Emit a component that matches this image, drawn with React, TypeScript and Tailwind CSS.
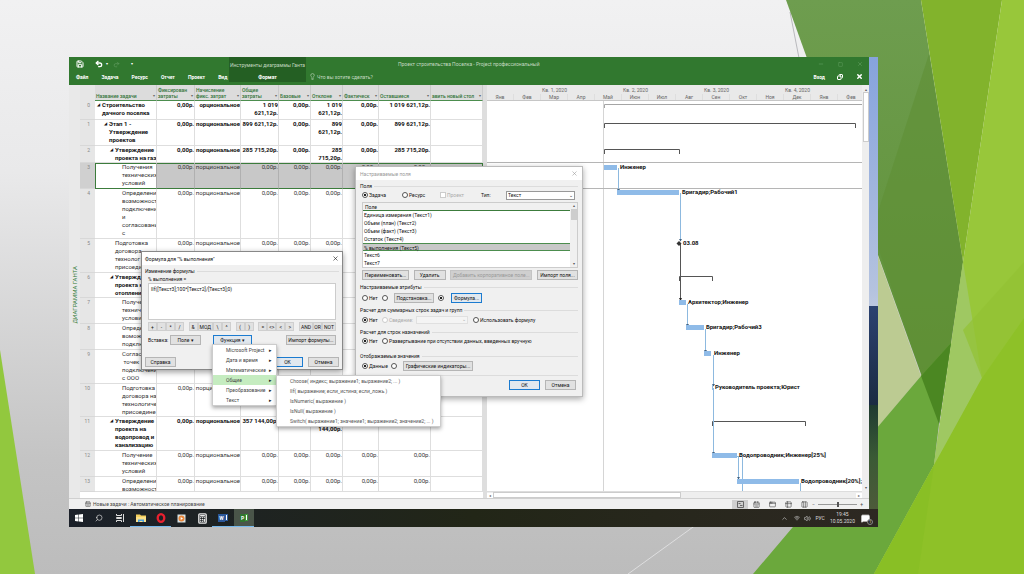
import React, { useState } from 'react';
import { clsx } from 'clsx';
import {
  AppWindow, Calculator, CalendarDays, ChevronUp, Columns3, Copy, Lightbulb, MessageSquare,
  Minus, Redo2, Save, Search, Square, Table2, Undo2, Volume2, Wifi, X,
} from 'lucide-react';

interface TaskRow {
  id: number;
  height: string;
  indent: string;
  name: string;
  values: string[];
  summary?: boolean;
  selected?: boolean;
}

const ZERO = '0,00р.';
const SHARE = 'порциональное';

const rows: TaskRow[] = [
  { id: 0, height: 'h-[19px]', indent: 'pl-[7px]', summary: true, name: 'Строительство\nдачного поселка', values: [ZERO, 'орциональное', '1 019\n621,12р.', ZERO, '1 019\n621,12р.', ZERO, '1 019 621,12р.'] },
  { id: 1, height: 'h-[26px]', indent: 'pl-[14px]', summary: true, name: 'Этап 1 -\nУтверждение\nпроектов', values: [ZERO, SHARE, '899 621,12р.', ZERO, '899\n621,12р.', ZERO, '899 621,12р.'] },
  { id: 2, height: 'h-[17px]', indent: 'pl-[20px]', summary: true, name: 'Утверждение\nпроекта на газ', values: [ZERO, SHARE, '285 715,20р.', ZERO, '285\n715,20р.', ZERO, '285 715,20р.'] },
  { id: 3, height: 'h-[26px]', indent: 'pl-[27px]', selected: true, name: 'Получения\nтехнических\nусловий', values: [ZERO, SHARE, ZERO, ZERO, ZERO, ZERO, ZERO] },
  { id: 4, height: 'h-[50px]', indent: 'pl-[27px]', name: 'Определени\nвозможност\nподключени\nи\nсогласовани\nс', values: [ZERO, SHARE, ZERO, ZERO, ZERO, '', ''] },
  { id: 5, height: 'h-[34px]', indent: 'pl-[20px]', name: 'Подготовка\nдоговора\nтехнолог\nприсоеди', values: [ZERO, SHARE, ZERO, ZERO, ZERO, '', ''] },
  { id: 6, height: 'h-[25px]', indent: 'pl-[20px]', summary: true, name: 'Утвержд\nпроекта н\nотоплени', values: ['', '', '', '', '', '', ''] },
  { id: 7, height: 'h-[26px]', indent: 'pl-[27px]', name: 'Получе\nтехнич\nуслови', values: ['', '', '', '', '', '', ''] },
  { id: 8, height: 'h-[26px]', indent: 'pl-[27px]', name: 'Опреде\nвомож\nподклю', values: ['', '', '', '', '', '', ''] },
  { id: 9, height: 'h-[34px]', indent: 'pl-[27px]', name: 'Соглас\n точек\nподключени\nс ООО', values: ['', '', '', '', '', '', ''] },
  { id: 10, height: 'h-[33px]', indent: 'pl-[27px]', name: 'Подготовка\nдоговора на\nтехнологиче\nприсоедине', values: [ZERO, SHARE, '', '', '', '', ''] },
  { id: 11, height: 'h-[34px]', indent: 'pl-[20px]', summary: true, name: 'Утверждение\nпроекта на\nводопровод и\nканализацию', values: [ZERO, SHARE, '357 144,00р.', '', '\n144,00р.', '', ''] },
  { id: 12, height: 'h-[26px]', indent: 'pl-[27px]', name: 'Получение\nтехнических\nусловий', values: [ZERO, SHARE, ZERO, ZERO, ZERO, ZERO, ZERO] },
  { id: 13, height: 'h-[15px]', indent: 'pl-[27px]', name: 'Определени\nвозможност', values: [ZERO, SHARE, ZERO, ZERO, ZERO, ZERO, ZERO] },
];

const columns = [
  { title: 'Название задачи', width: 'w-[62px]' },
  { title: 'Фиксирован\nзатраты', width: 'w-[38px]' },
  { title: 'Начисление\nфикс. затрат', width: 'w-[46px]' },
  { title: 'Общие\nзатраты', width: 'w-[38px]' },
  { title: 'Базовые', width: 'w-[32px]' },
  { title: 'Отклоне', width: 'w-[32px]' },
  { title: 'Фактическ', width: 'w-[36px]' },
  { title: 'Оставшиеся', width: 'w-[52px]' },
  { title: 'авить новый стол', width: 'w-[52px]' },
];

const quarters = ['Кв. 1, 2020', 'Кв. 2, 2020', 'Кв. 3, 2020', 'Кв. 4, 2020'];
const months = ['Янв', 'Фев', 'Мар', 'Апр', 'Май', 'Июн', 'Июл', 'Авг', 'Сен', 'Окт', 'Ноя', 'Дек', 'Янв', 'Фев'];

// Gantt geometry, measured from the top left corner of the chart
const bars = [
  { x: 117, y: 65, w: 13, label: 'Инженер', lx: 133 },
  { x: 130, y: 90, w: 62, label: 'Бригадир;Рабочий1', lx: 195 },
  { x: 192, y: 200, w: 7, label: 'Архитектор;Инженер', lx: 201 },
  { x: 199, y: 225, w: 18, label: 'Бригадир;Рабочий3', lx: 219 },
  { x: 217, y: 251, w: 7, label: 'Инженер', lx: 227 },
  { x: 225, y: 285, w: 1, label: 'Руководитель проекта;Юрист', lx: 228 },
  { x: 225, y: 353, w: 25, label: 'Водопроводник;Инженер[25%]', lx: 252 },
  { x: 250, y: 379, w: 62, label: 'Водопроводник[20%];', lx: 314 },
];

const brackets = [
  { x: 117, y: 22, w: 251 },
  { x: 117, y: 48, w: 75 },
  { x: 192, y: 175, w: 33 },
  { x: 225, y: 320, w: 93 },
];

const links = [
  { x: 131, y: 67, to: 90 },
  { x: 193, y: 92, to: 140 },
  { x: 200, y: 203, to: 225 },
  { x: 218, y: 228, to: 251 },
  { x: 226, y: 254, to: 285 },
  { x: 226, y: 287, to: 353 },
  { x: 251, y: 356, to: 378 },
];

const fields = ['Единица измерения (Текст1)', 'Объем (план) (Текст2)', 'Объем (факт) (Текст3)', 'Остаток (Текст4)', '% выполнения (Текст5)', 'Текст6', 'Текст7'];
const functionGroups = ['Microsoft Project', 'Дата и время', 'Математические', 'Общие', 'Преобразование', 'Текст'];
const functionNames = [
  'Choose( индекс; выражение1; выражение2; ... )',
  'IIf( выражение; если_истина; если_ложь )',
  'IsNumeric( выражение )',
  'IsNull( выражение )',
  'Switch( выражение1; значение1; выражение2; значение2; ... )',
];
const operators = [['+', '-', '*', '/'], ['&', 'МОД', '\\', '^'], ['(', ')'], ['=', '<>', '<', '>'], ['AND', 'OR', 'NOT']];

const Backdrop = () => (
  <svg className="absolute inset-0 h-full w-full" viewBox="0 0 1024 574" preserveAspectRatio="none" aria-hidden="true">
    <defs>
      <linearGradient id="paper" x1="0" y1="0" x2="0" y2="1">
        <stop offset="0" stopColor="#f1f1f2" />
        <stop offset="0.3" stopColor="#e9e9ea" />
        <stop offset="0.8" stopColor="#c4c4c4" />
        <stop offset="1" stopColor="#bcbcbc" />
      </linearGradient>
      <linearGradient id="forest" x1="0" y1="0" x2="0" y2="1">
        <stop offset="0" stopColor="#6e9d4f" />
        <stop offset="1" stopColor="#5d8f33" />
      </linearGradient>
    </defs>
    <rect width="1024" height="574" fill="url(#paper)" />
    <path d="M790 12 799 58" stroke="#b9b9bd" fill="none" />
    <path d="M628 574 700 522" stroke="#dededf" fill="none" />
    <path d="M0 350 35 574H0Z" fill="#92c83e" />
    <path d="M878 256 921 376 878 427Z" fill="#bccb92" />
    <path d="M786 0H921L963 262 939 424Z" fill="url(#forest)" />
    <path d="M929 54 963 262 939 424 872 230Z" fill="#5f9035" opacity="0.6" />
    <path d="M951 343 921 376 753 574H874L934 465 939 424Z" fill="#6ba83c" />
    <path d="M951 343 921 376 939 424Z" fill="#4b8722" />
    <path d="M921 0H1002L963 262Z" fill="#82b32c" />
    <path d="M1002 0H1024V574H874L934 465 963 262Z" fill="#98c73a" />
    <path d="M963 262 982 378 946 445 934 465Z" fill="#9fc862" />
    <path d="M1024 262 963 330 982 378 1024 318Z" fill="#93c233" opacity="0.7" />
    <path d="M1024 318 982 378 874 574H1024Z" fill="#8ec128" />
    <path d="M934 465 918 574H874Z" fill="#89bf25" />
  </svg>
);

const Ribbon = () => (
  <header className="flex h-[28px] bg-[#31782f] text-[5px] leading-[6px] text-white">
    <div className="flex w-[160px] shrink-0 flex-col justify-between pt-[3px] pb-[5px] pl-[7px]">
      <div className="flex h-[8px] items-center gap-[3px]">
        <button aria-label="Сохранить" className="mr-[8px]"><Save size={8} strokeWidth={3} /></button>
        <button aria-label="Отменить"><Undo2 size={8} strokeWidth={4} /></button>
        <span className="text-[4px]">▾</span>
        <button aria-label="Вернуть" className="ml-[2px] text-[#67a065]"><Redo2 size={7} /></button>
        <span className="ml-[8px] text-[4px]">▾</span>
      </div>
      <nav className="flex gap-[13px] font-bold">
        <button>Файл</button>
        <button>Задача</button>
        <button>Ресурс</button>
        <button>Отчет</button>
        <button>Проект</button>
        <button>Вид</button>
      </nav>
    </div>
    <div className="flex h-[25px] w-[77px] shrink-0 flex-col items-center justify-between bg-[#245f23] pt-[5px] pb-[2px]">
      <span className="whitespace-nowrap text-[#c4dac2]">Инструменты диаграммы Ганта</span>
      <button className="font-bold">Формат</button>
    </div>
    <div className="flex min-w-0 flex-1 flex-col justify-between pt-[4px] pr-[6px] pb-[5px] pl-[3px]">
      <div className="flex items-center text-[#c4dac2]">
        <span className="flex-1 pl-[89px]">Проект строительства Поселка - Project профессиональный</span>
        <div className="flex w-[45px] justify-between text-[#6ba569]">
          <button aria-label="Свернуть"><Minus size={6} /></button>
          <button aria-label="Развернуть"><Square size={5} /></button>
          <button aria-label="Закрыть"><X size={6} /></button>
        </div>
      </div>
      <div className="flex items-center">
        <Lightbulb size={7} className="mr-px text-[#c4dac2]" />
        <button className="text-[#c4dac2]">Что вы хотите сделать?</button>
        <button className="mr-[12px] ml-auto font-bold">Вход</button>
        <button aria-label="Восстановить окно" className="mr-[13px]"><Copy size={6} strokeWidth={4} className="-scale-x-100" /></button>
        <button aria-label="Закрыть проект"><X size={7} strokeWidth={5} /></button>
      </div>
    </div>
  </header>
);

const TaskTable = () => (
  <table className="w-[403px] table-fixed border-separate border-spacing-0 text-[6px] leading-[8px] text-[#333]">
    <thead>
      <tr className="h-[16px] text-[5px] leading-[6px] text-[#33743a]">
        <th className="w-[15px] bg-[#e6e6e6]" aria-label="Номер" />
        {columns.map((col) => (
          <th key={col.title} className={clsx('overflow-hidden border-r border-b border-r-[#cacaca] border-b-[#4c8d4e] bg-[#dcdcdc] px-px pb-px align-bottom font-medium', col.width)}>
            <div className="flex items-end justify-between">
              <span className="whitespace-pre text-left">{col.title}</span>
              <span className="text-[4px] text-[#666]">▾</span>
            </div>
          </th>
        ))}
      </tr>
    </thead>
    <tbody>
      {rows.map((row) => (
        <tr key={row.id} className={clsx(row.height, row.summary && 'font-bold text-[#111]')}>
          <td className={clsx('border-b border-b-[#d8d8d8] p-0 pr-[5px] text-right align-top text-[5px] font-normal text-[#888]', row.selected ? 'bg-[#d0d0d0]' : 'bg-[#e6e6e6]')}>
            {row.id}
          </td>
          <td className={clsx('relative overflow-hidden border-r border-b p-0 align-top whitespace-pre', row.indent, row.selected ? 'border-b-[#3c7c3c] border-r-[#aaa] shadow-[inset_1px_1px_#3c7c3c]' : 'border-[#dedede]')}>
            {row.summary && <span className="absolute -ml-[5px] text-[4px] leading-[8px]">◢</span>}
            <div className={row.id === 13 ? 'h-[14px] overflow-hidden' : ''}>{row.name}</div>
          </td>
          {row.values.map((value, i) => (
            <td key={i} className={clsx('overflow-hidden border-r border-b p-0 align-top', row.selected ? 'border-b-[#3c7c3c] border-r-[#b0b0b0] bg-[#c8c8c8] shadow-[inset_0_1px_#3c7c3c]' : 'border-[#dedede]')}>
              <div className="flex justify-end text-right whitespace-pre">{value}</div>
            </td>
          ))}
          <td className={clsx('border-r border-b', row.selected ? 'border-b-[#3c7c3c] border-r-[#3c7c3c] bg-[#c8c8c8] shadow-[inset_0_1px_#3c7c3c]' : 'border-[#dedede]')} />
        </tr>
      ))}
    </tbody>
  </table>
);

const GanttChart = () => (
  <div className="flex min-w-0 flex-1 flex-col">
    <div className="overflow-hidden border-b border-[#c6c6c6] bg-[#e9e9e9] text-[5px] leading-[6px] text-[#666]">
      <div className="flex h-[8px] items-center pl-[27px] pt-px">
        {quarters.map((q) => <span key={q} className="w-[81px] shrink-0 text-center">{q}</span>)}
      </div>
      <div className="flex h-[7px] items-center">
        {months.map((m, i) => <span key={i} className="w-[27px] shrink-0 border-r border-[#dedede] text-center">{m}</span>)}
      </div>
    </div>
    <svg className="block h-[390px] w-full bg-white" fontSize="6" fontWeight="bold" fill="#111">
      <path d="M116.500 0V390" stroke="#d5d5d5" />
      <path d="M117.500 7V3.500H375" stroke="#a5a5a5" fill="none" />
      <path d="M0 61.500H375M0 87.500H375" stroke="#b5b5b5" />
      {brackets.map((b) => (
        <path key={`${b.x}-${b.y}`} d={`M${b.x + 0.5} ${b.y + 5}V${b.y + 0.5}H${b.x + b.w + 0.5}V${b.y + 5}`} stroke="#555" fill="none" />
      ))}
      {links.map((l) => (
        <g key={l.y}>
          <path d={`M${l.x + 0.5} ${l.y}V${l.to}`} stroke="#8db9df" />
          <path d={`M${l.x - 1} ${l.to - 2}h3l-1.500 2.500z`} fill="#41607e" />
        </g>
      ))}
      <path d="M193.500 143V199" stroke="#555" />
      <path d="M192 197h3l-1.500 3z" fill="#222" />
      <path d="M192 140l2.500 2.500-2.500 2.500-2.500-2.500z" fill="#333" />
      <text x="196" y="144">03.08</text>
      <path d="M250 355.500H255.500V390M313.500 382V390" stroke="#8db9df" fill="none" />
      {bars.map((b) => (
        <g key={b.y}>
          <rect x={b.x} y={b.y - 1} width={b.w} height="5" fill="#8fbbe8" />
          <text x={b.lx} y={b.y + 3}>{b.label}</text>
        </g>
      ))}
    </svg>
    <div className="flex h-[7px] items-center justify-between border-t border-[#ddd] bg-[#eee] text-[4px] leading-[5px] text-[#666]">
      <button aria-label="Прокрутить влево" className="w-[6px] bg-white">◂</button>
      <div className="mr-auto h-[6px] w-1/2 border border-[#ccc] bg-white" />
      <button aria-label="Прокрутить вправо" className="w-[6px] bg-white">▸</button>
    </div>
  </div>
);

const StatusBar = () => (
  <footer className="flex h-[11px] items-center border-t border-[#d0d0d0] bg-[#f0f0f0] pr-[6px] pl-[16px] text-[5px] leading-[6px] text-[#444]">
    <CalendarDays size={6} className="mr-[2px]" />
    <span>Новые задачи : Автоматическое планирование</span>
    <div className="ml-auto flex items-center">
      <button aria-label="Диаграмма Ганта" className="flex h-[9px] w-[16px] items-center justify-center bg-[#cfcfcf]">
        <svg width="7" height="7" viewBox="0 0 7 7" fill="none" stroke="#666"><path d="M.5.5h6v6h-6zM1.500 2.500h2M3 4.500h2.500" /></svg>
      </button>
      <button aria-label="Использование задач" className="flex w-[16px] justify-center"><CalendarDays size={7} /></button>
      <button aria-label="Визуальный оптимизатор" className="flex w-[16px] justify-center"><AppWindow size={7} /></button>
      <button aria-label="Лист ресурсов" className="flex w-[16px] justify-center"><Table2 size={7} /></button>
      <button aria-label="Отчет" className="flex w-[16px] justify-center"><Columns3 size={7} /></button>
      <button aria-label="Уменьшить">−</button>
      <div className="mx-[3px] flex h-[5px] w-[39px] items-center justify-center bg-[linear-gradient(#999,#999)] bg-[length:100%_1px] bg-center bg-no-repeat">
        <span className="h-[5px] w-[2px] bg-[#555]" />
      </div>
      <button aria-label="Увеличить">+</button>
    </div>
  </footer>
);

const Taskbar = () => (
  <div className="flex h-[18px] items-stretch bg-linear-to-r from-[#1b2029] via-[#222617] to-[#2d2822] text-[5px] leading-[8px] text-[#ddd]">
    <button aria-label="Пуск" className="flex w-[20px] items-center justify-center">
      <svg width="8" height="8" viewBox="0 0 8 8" fill="#fff"><path d="M0 1l3.500-.5v3.300H0zM4 .5L8 0v3.800H4zM0 4.300h3.500v3.300L0 7zM4 4.300h4V8l-4-.5z" /></svg>
    </button>
    <button aria-label="Поиск" className="flex w-[20px] items-center justify-center"><Search size={8} className="-scale-x-100" /></button>
    <button aria-label="Представление задач" className="flex w-[21px] items-center justify-center">
      <svg width="8" height="8" viewBox="0 0 8 8" fill="none" stroke="#ddd"><path d="M.5 0v1.500h5V0M.5 8V6.500h5V8M.5 3.500h5v1h-5zM7.500 0v8" /></svg>
    </button>
    <button aria-label="Проводник" className="flex w-[21px] items-center justify-center border-b border-[#76b9ed]">
      <svg width="10" height="8" viewBox="0 0 10 8"><path d="M0 .5h4l1 1h5V8H0z" fill="#f4cf5e" /><path d="M0 3h10v5H0z" fill="#fbe08a" /><path d="M2 8V5.500h6V8H6.500V7h-3v1z" fill="#4aa0dc" /></svg>
    </button>
    <button aria-label="Opera" className="flex w-[20px] items-center justify-center border-b border-[#76b9ed]">
      <svg width="10" height="10" viewBox="0 0 10 10"><ellipse cx="5" cy="5" rx="3.300" ry="3.800" fill="none" stroke="#e8202f" strokeWidth="2.300" /></svg>
    </button>
    <button aria-label="Медиаплеер" className="flex w-[21px] items-center justify-center">
      <svg width="9" height="9" viewBox="0 0 9 9"><rect x=".5" y=".5" width="8" height="8" fill="#d8e2e4" /><circle cx="4.500" cy="4.500" r="3" fill="#e8863a" /><path d="M3.700 3v3l2.300-1.500z" fill="#fff" /></svg>
    </button>
    <button aria-label="Калькулятор" className="flex w-[20px] items-center justify-center"><Calculator size={11} color="#e8e8e8" strokeWidth={3} /></button>
    <button aria-label="Word" className="flex w-[22px] items-center justify-center border-b border-[#76b9ed]">
      <span className="bg-[#2b579a] px-px font-bold text-white">W</span>
      <span className="h-[7px] w-[3px] border border-[#2b579a] bg-white" />
    </button>
    <button aria-label="Project" className="flex w-[20px] items-center justify-center border-b border-[#76b9ed] bg-[#4a5549]">
      <span className="bg-[#31752f] px-px font-bold text-white">P</span>
      <span className="h-[7px] w-[3px] border border-[#3c9a3a] bg-white" />
    </button>
    <div className="ml-auto flex items-center gap-[4px] pr-[8px]">
      <ChevronUp size={7} />
      <Wifi size={6} className="ml-[2px]" />
      <Volume2 size={7} />
      <span>РУС</span>
      <div className="mx-px text-center leading-[7px]">
        <div>19:45</div>
        <div>10.05.2020</div>
      </div>
      <div className="relative ml-px">
        <MessageSquare size={9} fill="#fff" color="#fff" />
        <span className="absolute -right-[3px] -bottom-[2px] flex h-[6px] w-[6px] items-center justify-center rounded-full border border-[#888] bg-[#2d2822] text-[4px]">1</span>
      </div>
    </div>
  </div>
);

const dialogButton = 'flex h-[10px] items-center justify-center whitespace-nowrap border border-[#b5b5b5] bg-[#e1e1e1] text-[#111]';
const activeButton = 'flex h-[10px] items-center justify-center whitespace-nowrap border border-[#1b7bd0] bg-[#e1e8ef] text-[#111]';

interface ChoiceProps {
  name: string;
  label?: string;
  title?: string;
  checked?: boolean;
  disabled?: boolean;
  type?: string;
  className?: string;
}

const Choice: React.FC<ChoiceProps> = ({ name, label, title, checked, disabled, type = 'radio', className }) => (
  <label className={clsx('flex items-center gap-px whitespace-nowrap', disabled && 'text-[#aaa]', className)}>
    <input
      type={type}
      name={name}
      aria-label={title}
      defaultChecked={checked}
      disabled={disabled}
      className={clsx(
        'h-[6px] w-[6px] shrink-0 appearance-none border bg-white',
        type === 'radio' && 'rounded-full checked:bg-[radial-gradient(#222_45%,#fff_50%)]',
        disabled ? 'border-[#ccc]' : 'border-[#555]',
      )}
    />
    {label}
  </label>
);

const GroupTitle = ({ children }: { children: React.ReactNode }) => (
  <div className="flex items-center gap-[2px] whitespace-nowrap">
    {children}
    <span className="h-px flex-1 bg-[#dcdcdc]" />
  </div>
);

const FieldsDialog = () => (
  <section role="dialog" aria-label="Настраиваемые поля" className="absolute top-[109px] left-[286px] w-[228px] border border-[#bbb] bg-[#f0f0f0] pb-[6px] text-[5px] leading-[6px] text-[#111] shadow-[0_2px_6px_rgba(0,0,0,0.35)]">
    <div className="flex h-[13px] items-center justify-between bg-white px-[4px] text-[#999]">
      <span>Настраиваемые поля</span>
      <button aria-label="Закрыть"><X size={7} /></button>
    </div>
    <div className="px-[4px] pt-[3px]">
      <GroupTitle>Поля</GroupTitle>
      <div className="flex h-[12px] items-center pl-[2px]">
        <Choice name="owner" label="Задача" checked className="w-[40px]" />
        <Choice name="owner" label="Ресурс" className="w-[38px]" />
        <Choice name="owner" type="checkbox" label="Проект" disabled className="w-[41px]" />
        <label htmlFor="field-type" className="w-[25px]">Тип:</label>
        <div className="relative">
          <select id="field-type" className="block h-[9px] w-[69px] appearance-none border border-[#999] bg-white pl-px leading-[6px]">
            <option>Текст</option>
          </select>
          <span className="pointer-events-none absolute top-px right-[2px]">⌄</span>
        </div>
      </div>
      <div className="mt-px ml-[2px] flex h-[66px] overflow-hidden border border-[#ccc] bg-white">
        <div className="flex-1">
          <div className="h-[8px] border-b border-[#3c7c3c] bg-[#f0f0f0] pl-[2px] leading-[8px]">Поле</div>
          <ul>
            {fields.map((field) => (
              <li key={field} className={clsx('h-[8px] pl-px leading-[8px]', field.startsWith('%') && 'border-y border-[#4c8d4e] bg-[#c8c8c8] leading-[6px]')}>{field}</li>
            ))}
          </ul>
        </div>
        <div className="flex w-[7px] flex-col items-center justify-between bg-[#f0f0f0] text-[4px] text-[#555]">
          <span>▴</span>
          <span className="mb-auto h-[11px] w-[6px] bg-[#cdcdcd]" />
          <span>▾</span>
        </div>
      </div>
      <div className="mt-[2px] flex justify-between pl-[2px]">
        <button className={clsx(dialogButton, 'w-[47px]')}>Переименовать...</button>
        <button className={clsx(dialogButton, 'w-[32px]')}>Удалить</button>
        <button disabled className="flex h-[10px] w-[82px] items-center justify-center border border-[#c4c4c4] bg-[#cfcfcf] whitespace-nowrap text-[#999]">Добавить корпоративное поле...</button>
        <button className={clsx(dialogButton, 'w-[41px]')}>Импорт поля...</button>
      </div>
      <div className="mt-[4px]"><GroupTitle>Настраиваемые атрибуты</GroupTitle></div>
      <div className="mt-[3px] flex items-center pl-[2px]">
        <Choice name="attr" label="Нет" className="w-[20px]" />
        <Choice name="attr" title="Подстановка" className="w-[12px]" />
        <button className={clsx(dialogButton, 'mr-[4px] w-[40px]')}>Подстановка...</button>
        <Choice name="attr" title="Формула" checked className="w-[13px]" />
        <button className={clsx(activeButton, 'w-[31px]')}>Формула...</button>
      </div>
      <div className="mt-[4px]"><GroupTitle>Расчет для суммарных строк задач и групп</GroupTitle></div>
      <div className="mt-[3px] flex items-center pl-[2px]">
        <Choice name="rollup" label="Нет" checked className="w-[20px]" />
        <Choice name="rollup" label="Сведение:" disabled className="w-[34px]" />
        <div className="relative mr-[5px] text-[#aaa]">
          <select disabled aria-label="Сведение" className="block h-[8px] w-[52px] appearance-none border border-[#e0e0e0] bg-[#f4f4f4]" />
          <span className="pointer-events-none absolute top-0 right-[2px]">⌄</span>
        </div>
        <Choice name="rollup" label="Использовать формулу" />
      </div>
      <div className="mt-[5px]"><GroupTitle>Расчет для строк назначений</GroupTitle></div>
      <div className="mt-[3px] flex items-center pl-[2px]">
        <Choice name="assign" label="Нет" checked className="w-[20px]" />
        <Choice name="assign" label="Развертывание при отсутствии данных, введенных вручную" />
      </div>
      <div className="mt-[9px]"><GroupTitle>Отображаемые значения</GroupTitle></div>
      <div className="mt-[2px] flex items-center pl-[2px]">
        <Choice name="display" label="Данные" checked className="w-[29px]" />
        <Choice name="display" title="Графические индикаторы" className="w-[12px]" />
        <button className={clsx(dialogButton, 'w-[70px]')}>Графические индикаторы...</button>
      </div>
      <div className="mt-[4px] flex justify-end gap-[5px] border-t border-[#dcdcdc] pt-[4px] pr-[2px]">
        <button className={clsx(activeButton, 'w-[31px]')}>ОК</button>
        <button className={clsx(dialogButton, 'w-[31px]')}>Отмена</button>
      </div>
    </div>
  </section>
);

const FormulaDialog = () => {
  const [formula, setFormula] = useState('IIf([Текст3];100*[Текст2]/[Текст3];0)');
  return (
    <section role="dialog" aria-label="Формула" className="absolute top-[194px] left-[72px] w-[202px] border border-[#888] bg-[#f0f0f0] pb-[2px] text-[5px] leading-[6px] text-[#111] shadow-[0_2px_6px_rgba(0,0,0,0.4)]">
      <div className="flex h-[13px] items-center justify-between bg-white px-[3px]">
        <span>Формула для "% выполнения"</span>
        <button aria-label="Закрыть"><X size={7} /></button>
      </div>
      <div className="px-[3px] pt-[3px]">
        <GroupTitle>Изменение формулы</GroupTitle>
        <div className="px-[3px]">
          <label htmlFor="formula" className="mt-[2px] block">% выполнения =</label>
          <textarea
            id="formula"
            value={formula}
            onChange={(e) => setFormula(e.target.value)}
            className="mt-px block h-[37px] w-full resize-none border border-[#ccc] bg-white px-[2px] pt-[2px]"
          />
          <div className="mt-[2px] flex justify-between">
            {operators.map((group, i) => (
              <div key={i} className="flex">
                {group.map((op) => (
                  <button key={op} className={clsx('h-[9px] min-w-[9px] border border-[#cfcfcf] bg-[#e1e1e1]', op.length > 2 && 'px-px')}>{op}</button>
                ))}
              </div>
            ))}
          </div>
          <div className="mt-[4px] flex items-center">
            <span className="w-[22px]">Вставка:</span>
            <button className={clsx(dialogButton, 'mr-[12px] w-[31px]')}>Поле ▾</button>
            <button className={clsx(activeButton, 'w-[39px]')}>Функция ▾</button>
            <button className={clsx(dialogButton, 'ml-auto w-[50px]')}>Импорт формулы...</button>
          </div>
        </div>
        <div className="mt-[12px] flex gap-[5px]">
          <button className={clsx(dialogButton, 'mr-auto w-[31px]')}>Справка</button>
          <button className={clsx(activeButton, 'w-[31px]')}>ОК</button>
          <button className={clsx(dialogButton, 'w-[31px]')}>Отмена</button>
        </div>
      </div>
    </section>
  );
};

const FunctionMenu = () => (
  <>
    <ul role="menu" className="absolute top-[287px] left-[143px] w-[65px] border border-[#ccc] bg-white text-[5px] leading-[10px] text-[#444] shadow-[0_2px_4px_rgba(0,0,0,0.35)]">
      {functionGroups.map((group) => (
        <li key={group} role="menuitem" className={clsx('flex h-[10px] items-center justify-between pr-[4px] pl-[13px]', group === 'Общие' && 'bg-[#c5ecc0]')}>
          {group}
          <span className="text-[#222]">▸</span>
        </li>
      ))}
    </ul>
    <ul role="menu" className="absolute top-[318px] left-[207px] w-[165px] border border-[#ccc] bg-white text-[5px] leading-[10px] text-[#555] shadow-[0_2px_4px_rgba(0,0,0,0.35)]">
      {functionNames.map((fn) => (
        <li key={fn} role="menuitem" className="h-[10px] pl-[13px] whitespace-nowrap">{fn}</li>
      ))}
    </ul>
  </>
);

export default function App() {
  return (
    <div className="relative min-h-screen overflow-hidden font-['Roboto','Liberation_Sans',sans-serif]">
      <Backdrop />
      <main className="relative mt-[57px] mr-[146px] ml-[69px]">
        <div className="bg-linear-to-b from-[#86a3dc] via-[#b5c3df] via-50% to-[#c0cbe0] to-55%">
          <div className="flex">
            <div className="min-w-0 flex-1 bg-white">
              <Ribbon />
              <div className="flex">
                <div className="flex w-[11px] shrink-0 items-center justify-center bg-[#e9e9e9] pt-[6px]">
                  <span className="rotate-180 text-[6px] leading-[8px] whitespace-nowrap text-[#2f7a35] [writing-mode:vertical-rl]">ДИАГРАММА ГАНТА</span>
                </div>
                <div className="shrink-0 border-r-4 border-[#dedede]"><TaskTable /></div>
                <GanttChart />
                <div className="flex w-[7px] shrink-0 flex-col items-center bg-[#eee] pt-[2px] text-[4px] leading-[5px] text-[#555]">
                  <button aria-label="Прокрутить вверх">▴</button>
                  <div className="h-[50px] w-[6px] border border-[#ccc] bg-white" />
                  <button aria-label="Прокрутить вниз" className="mt-auto mb-[8px]">▾</button>
                </div>
              </div>
              <StatusBar />
            </div>
            <div className="flex w-[9px] shrink-0 flex-col">
              <div className="flex-[55]" />
              <div className="flex-[22] bg-linear-to-b from-[#2b4271] to-[#1b2b42]" />
              <div className="flex-[23] bg-linear-to-b from-[#1f3a30] via-[#3a5a35] to-[#4d5a3a]" />
            </div>
          </div>
          <Taskbar />
        </div>
        <FieldsDialog />
        <FormulaDialog />
        <FunctionMenu />
      </main>
    </div>
  );
}
